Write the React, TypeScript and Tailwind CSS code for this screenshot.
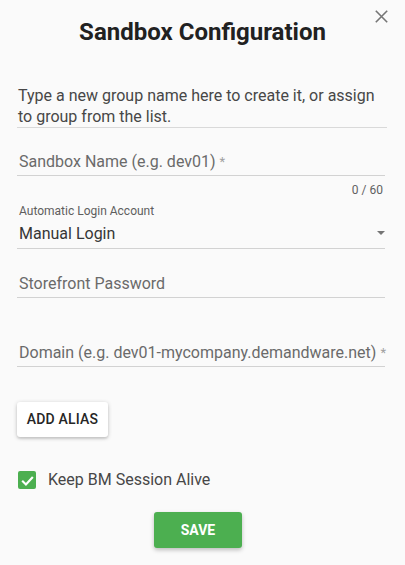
import React from "react";

export default function App() {
  return (
    <div className="relative w-[405px] h-[565px] bg-[#fafafa] font-['Roboto',sans-serif] text-[#212121] overflow-hidden">
      <button className="absolute left-[375px] top-[10px] w-[13px] h-[13px] p-0" aria-label="close">
        <svg viewBox="0 0 13 13" width="13" height="13" className="block">
          <path d="M0.8 0.8 L12.2 12.2 M12.2 0.8 L0.8 12.2" stroke="#757575" strokeWidth="1.6" fill="none" />
        </svg>
      </button>

      <div className="pt-[18px] h-[46px] text-center text-[24px] leading-[28px] font-bold text-[#212121]">
        Sandbox Configuration
      </div>

      <div className="px-[17px]">
        <div className="mt-[39px] mr-[1px] text-[16px] leading-[21px] text-[#474747] border-b border-[#d9d9d9] pl-[1px]">
          Type a new group name here to create it, or assign to group from the list.
        </div>

        <div className="mt-[24px] mr-[3px] pb-[3px] border-b border-[#d2d2d2]">
          <div className="h-[20px] leading-[20px] text-[16px] text-[#6a6a6a] pl-[2px]">
            Sandbox Name (e.g. dev01) <span className="text-[#a0a0a0] text-[13px] align-top">*</span>
          </div>
        </div>

        <div className="mt-[7px] pr-[5px] text-right text-[12px] leading-[14px] text-[#616161]">0 / 60</div>

        <div className="mt-[7px] pl-[2px] text-[12px] leading-[14px] text-[#5e5e5e]">Automatic Login Account</div>

        <div className="mt-[6px] mr-[3px] pb-[4px] border-b border-[#d2d2d2] flex items-center justify-between">
          <div className="h-[20px] leading-[20px] text-[16px] text-[#363636] pl-[2px]">Manual Login</div>
          <svg width="8" height="4" viewBox="0 0 8 4" className="mt-[-2px]">
            <path d="M0 0 L8 0 L4 4 Z" fill="#757575" />
          </svg>
        </div>

        <div className="mt-[25px] mr-[3px] pb-[3px] border-b border-[#d2d2d2]">
          <div className="h-[20px] leading-[20px] text-[16px] text-[#6a6a6a] pl-[2px]">Storefront Password</div>
        </div>

        <div className="mt-[45px] mr-[3px] pb-[3px] border-b border-[#d2d2d2]">
          <div className="h-[20px] leading-[20px] text-[16px] text-[#6a6a6a] pl-[2px] whitespace-nowrap">
            Domain (e.g. dev01-mycompany.demandware.net) <span className="text-[#a0a0a0] text-[13px] align-top">*</span>
          </div>
        </div>

        <button className="mt-[35px] block w-[91px] h-[35px] bg-white rounded-[3px] shadow-[0_1px_4px_rgba(0,0,0,0.22),0_2px_2px_rgba(0,0,0,0.08)] text-[14px] font-medium text-[#262626] tracking-[0.2px]">
          ADD ALIAS
        </button>

        <label className="mt-[34px] flex items-center h-[18px] pl-[1px]">
          <span className="w-[18px] h-[18px] rounded-[2px] bg-[#4caf50] flex items-center justify-center">
            <svg width="15" height="15" viewBox="0 0 24 24">
              <path d="M3.5 12.5 L9.5 18.5 L20.5 6.5" stroke="white" strokeWidth="3.4" fill="none" />
            </svg>
          </span>
          <span className="ml-[12px] text-[16px] leading-[20px] text-[#474747]">Keep BM Session Alive</span>
        </label>

        <div className="mt-[23px] pl-[137px]">
          <button className="block w-[88px] h-[36px] bg-[#4caf50] rounded-[3px] shadow-[0_2px_4px_rgba(0,0,0,0.25)] text-white text-[14px] font-bold">
            SAVE
          </button>
        </div>
      </div>
    </div>
  );
}
